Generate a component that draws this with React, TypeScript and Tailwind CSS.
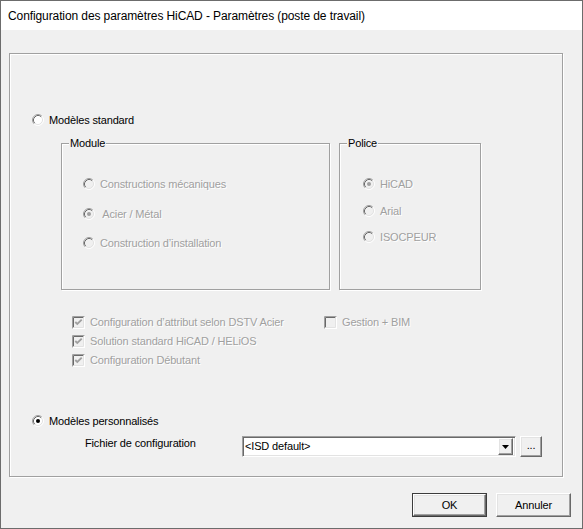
import React from "react";

const font = "font-['Liberation_Sans',Arial,sans-serif]";
const disabledText = "text-[#a0a0a0] [text-shadow:1px_1px_0_#ffffff]";

function RadioIcon({ checked, disabled }: { checked?: boolean; disabled?: boolean }) {
  return (
    <svg width="12" height="12" viewBox="0 0 12 12" className="shrink-0">
      <circle cx="6" cy="6" r="5" fill={disabled ? "#f0f0f0" : "#ffffff"} />
      <path d="M9.89 2.11 A5.5 5.5 0 0 0 2.11 9.89" fill="none" stroke="#a0a0a0" strokeWidth="1" />
      <path d="M9.18 2.82 A4.5 4.5 0 0 0 2.82 9.18" fill="none" stroke="#696969" strokeWidth="1" />
      <path d="M9.89 2.11 A5.5 5.5 0 0 1 2.11 9.89" fill="none" stroke="#ffffff" strokeWidth="1" />
      <path d="M9.18 2.82 A4.5 4.5 0 0 1 2.82 9.18" fill="none" stroke="#e3e3e3" strokeWidth="1" />
      {checked && <circle cx="6" cy="6" r="2" fill={disabled ? "#a0a0a0" : "#000000"} />}
    </svg>
  );
}

function CheckIcon({ checked, disabled }: { checked?: boolean; disabled?: boolean }) {
  return (
    <svg width="13" height="13" viewBox="0 0 13 13" className="shrink-0">
      <rect x="0" y="0" width="13" height="13" fill="#ffffff" />
      <path d="M0.5 12.5 V0.5 H12.5" fill="none" stroke="#a0a0a0" />
      <path d="M1.5 11.5 V1.5 H11.5" fill="none" stroke="#696969" />
      <path d="M1.5 11.5 H11.5 V1.5" fill="none" stroke="#e3e3e3" />
      <rect x="2" y="2" width="9" height="9" fill={disabled ? "#f0f0f0" : "#ffffff"} />
      {checked && (
        <path d="M3.3 6 L5.3 8 L9.7 3.6" fill="none" stroke={disabled ? "#a0a0a0" : "#000000"} strokeWidth="1.8" />
      )}
    </svg>
  );
}

function Radio({ label, checked, disabled, className = "" }: { label: string; checked?: boolean; disabled?: boolean; className?: string }) {
  return (
    <div className={`flex h-[14px] items-center gap-[5px] ${className}`}>
      <RadioIcon checked={checked} disabled={disabled} />
      <span className={`whitespace-pre leading-[14px] ${disabled ? disabledText : "text-black"}`}>{label}</span>
    </div>
  );
}

function Check({ label, checked, disabled, className = "" }: { label: string; checked?: boolean; disabled?: boolean; className?: string }) {
  return (
    <div className={`flex h-[14px] items-center gap-[5px] ${className}`}>
      <CheckIcon checked={checked} disabled={disabled} />
      <span className={`whitespace-pre leading-[14px] ${disabled ? disabledText : "text-black"}`}>{label}</span>
    </div>
  );
}

const etched = "border border-[#a0a0a0] shadow-[inset_1px_1px_0_#ffffff,1px_1px_0_#ffffff]";
const raised =
  "border border-t-white border-l-white border-r-[#696969] border-b-[#696969] shadow-[inset_-1px_-1px_0_#a0a0a0,inset_1px_1px_0_#e3e3e3] bg-[#f0f0f0]";

function GroupBox({ title, className, children }: { title: string; className: string; children: React.ReactNode }) {
  return (
    <div className={`relative ${etched} ${className}`}>
      <span className="absolute left-[7px] top-[-8px] bg-[#f0f0f0] px-[1px] leading-[14px] text-black">{title}</span>
      {children}
    </div>
  );
}

export default function App() {
  return (
    <div className={`${font} flex h-[529px] w-[583px] flex-col border border-[#6c6c6c] bg-[#f0f0f0] text-[11px] tracking-[-0.15px]`}>
      {/* Title bar */}
      <div className="flex h-[29px] shrink-0 items-center bg-white pl-[7px] text-[12px] tracking-[-0.1px] text-black">
        Configuration des paramètres HiCAD - Paramètres (poste de travail)
      </div>

      <div className="flex flex-1 flex-col pl-[8px] pr-[11px] pt-[23px]">
        {/* Main panel */}
        <div className={`h-[424px] w-[554px] ${etched}`}>
          <Radio label="Modèles standard" className="ml-[22px] mt-[59px]" />

          <div className="ml-[51px] mt-[16px] flex gap-[9px]">
            <GroupBox title="Module" className="h-[147px] w-[269px]">
              <Radio label="Constructions mécaniques" disabled className="ml-[21px] mt-[33px]" />
              <Radio label=" Acier / Métal" checked disabled className="ml-[21px] mt-[16px]" />
              <Radio label="Construction d’installation" disabled className="ml-[21px] mt-[15px]" />
            </GroupBox>
            <GroupBox title="Police" className="h-[147px] w-[142px]">
              <Radio label="HiCAD" checked disabled className="ml-[23px] mt-[33px]" />
              <Radio label="Arial" disabled className="ml-[23px] mt-[13px]" />
              <Radio label="ISOCPEUR" disabled className="ml-[23px] mt-[12px]" />
            </GroupBox>
          </div>

          <div className="ml-[62px] mt-[25px] flex">
            <div className="flex w-[252px] flex-col gap-[5px]">
              <Check label="Configuration d’attribut selon DSTV Acier" checked disabled />
              <Check label="Solution standard HiCAD / HELiOS" checked disabled />
              <Check label="Configuration Débutant" checked disabled />
            </div>
            <Check label="Gestion + BIM" disabled />
          </div>

          <Radio label="Modèles personnalisés" checked className="ml-[22px] mt-[47px]" />

          <div className="mt-[8px] flex items-start">
            <span className="ml-[75px] w-[157px] leading-[14px] text-black">Fichier de configuration</span>
            <div className="flex h-[21px] w-[274px] items-center border-l border-t border-l-[#a0a0a0] border-t-[#a0a0a0] border-r border-b border-r-white border-b-white bg-white shadow-[inset_1px_1px_0_#696969,inset_-1px_-1px_0_#e3e3e3]">
              <span className="flex-1 pl-[2px] text-black">&lt;ISD default&gt;</span>
              <div className={`mr-[2px] flex h-[17px] w-[15px] items-center justify-center ${raised}`}>
                <svg width="7" height="4" viewBox="0 0 7 4">
                  <path d="M0 0 H7 L3.5 4 Z" fill="#000000" />
                </svg>
              </div>
            </div>
            <div className={`ml-[4px] flex h-[21px] w-[22px] items-center justify-center pb-[2px] text-black ${raised}`}>...</div>
          </div>
        </div>

        {/* Buttons */}
        <div className="mt-[16px] flex justify-end gap-[9px]">
          <div className="h-[24px] w-[75px] border border-[#3c3c3c]">
            <div className={`flex h-full w-full items-center justify-center text-black ${raised}`}>OK</div>
          </div>
          <div className={`flex h-[24px] w-[75px] items-center justify-center text-black ${raised}`}>Annuler</div>
        </div>
      </div>
    </div>
  );
}
